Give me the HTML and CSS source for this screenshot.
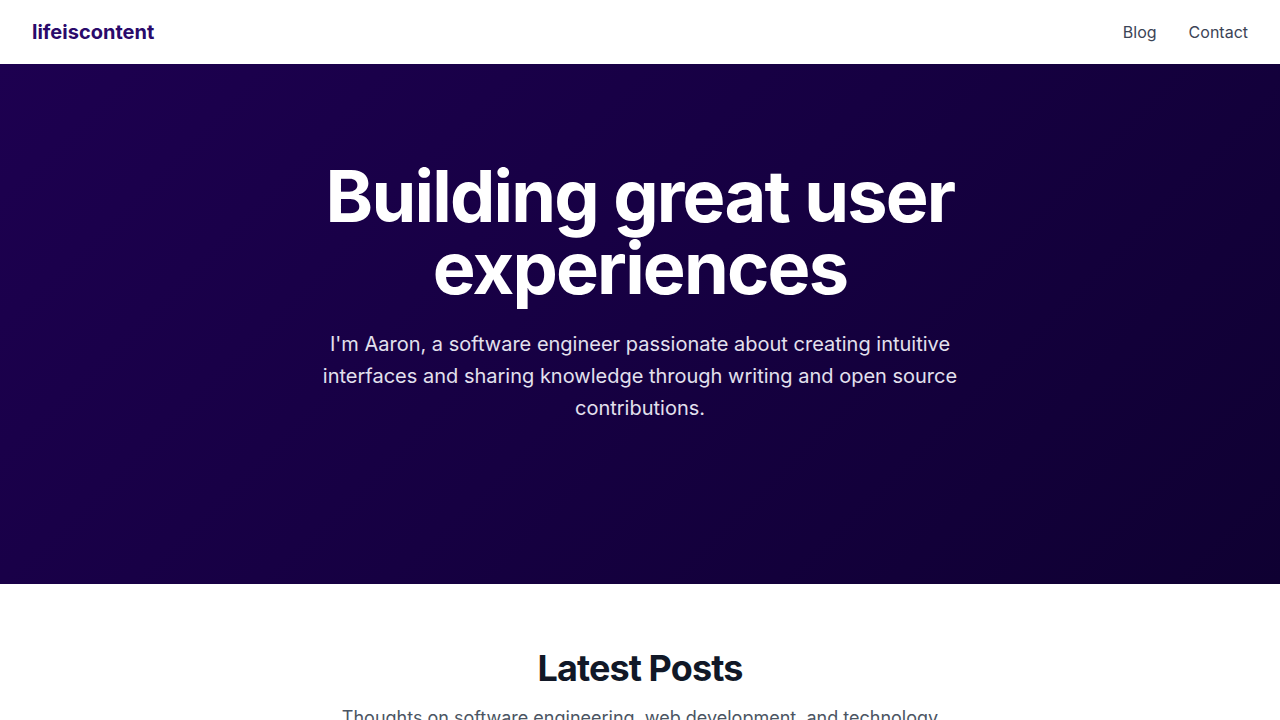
FILE: index.html
```html
<!DOCTYPE html>
<html lang="en">
<head>
<meta charset="utf-8">
<title>lifeiscontent</title>
<link rel="stylesheet" href="styles.css">
</head>
<body>
<header class="site-header">
  <a class="logo" href="#">lifeiscontent</a>
  <nav class="nav">
    <a href="#">Blog</a>
    <a href="#">Contact</a>
  </nav>
</header>
<section class="hero">
  <div class="hero-inner">
    <h1 class="hero-title">Building great user experiences</h1>
    <p class="hero-text">I'm Aaron, a software engineer passionate about creating intuitive interfaces and sharing knowledge through writing and open source contributions.</p>
  </div>
</section>
<section class="posts">
  <h2 class="posts-title">Latest Posts</h2>
  <p class="posts-sub">Thoughts on software engineering, web development, and technology</p>
</section>
</body>
</html>
```

FILE: styles.css
```css
* { box-sizing: border-box; }
html, body { margin: 0; padding: 0; }
body {
  font-family: Inter, "Noto Sans", sans-serif;
  background: #ffffff;
  color: #111827;
}
a { text-decoration: none; }

.site-header {
  height: 64px;
  display: flex;
  align-items: center;
  justify-content: space-between;
  padding: 0 32px;
  background: #ffffff;
}
.logo {
  font-size: 20px;
  font-weight: 700;
  color: #2a0a6b;
}
.nav {
  display: flex;
  gap: 32px;
}
.nav a {
  font-size: 16px;
  color: #3b4456;
}

.hero {
  height: 520px;
  background: linear-gradient(135deg, #1d0050 0%, #160042 50%, #0f0032 100%);
  padding-top: 96px;
  display: flex;
  justify-content: center;
}
.hero-inner {
  max-width: 672px;
  text-align: center;
}
.hero-title {
  margin: 0;
  font-size: 72px;
  line-height: 1;
  font-weight: 700;
  letter-spacing: -0.025em;
  color: #ffffff;
}
.hero-text {
  margin: 24px auto 0;
  font-size: 20px;
  line-height: 32px;
  color: #e3e0ee;
  max-width: 650px;
}

.posts {
  padding-top: 64px;
  text-align: center;
}
.posts-title {
  margin: 0;
  font-size: 36px;
  line-height: 40px;
  font-weight: 700;
  letter-spacing: -0.025em;
  color: #111827;
}
.posts-sub {
  margin: 16px auto 0;
  font-size: 18px;
  line-height: 28px;
  color: #4b5563;
}
```
